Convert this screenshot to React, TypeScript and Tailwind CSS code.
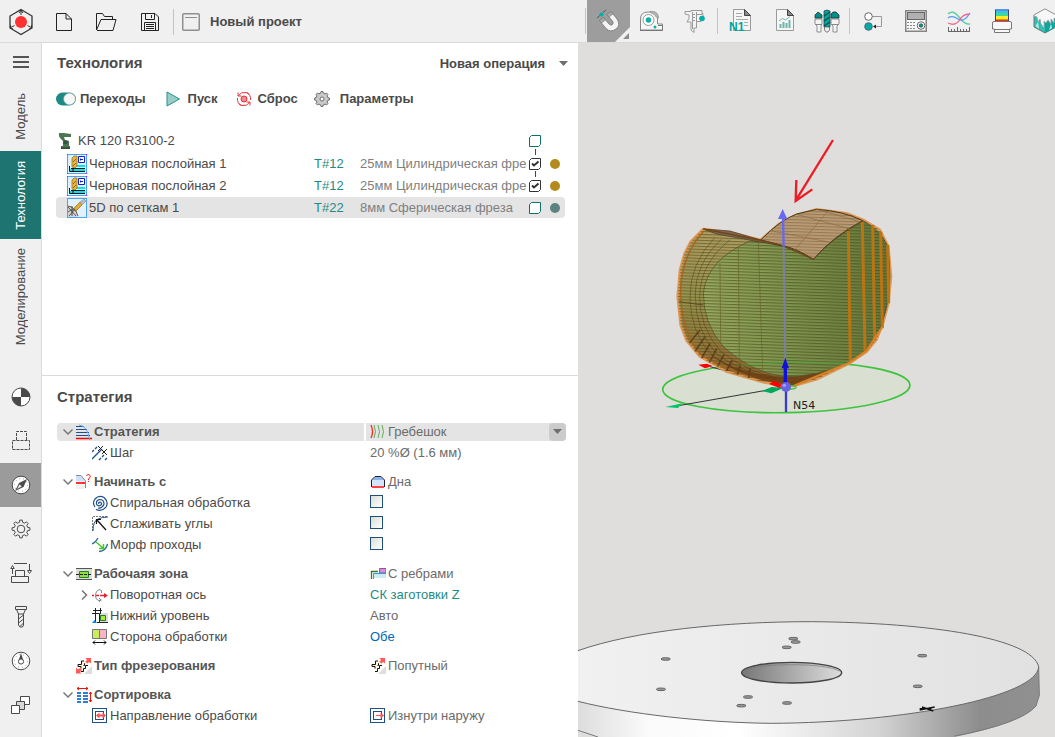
import React from 'react';
import clsx from 'clsx';

type IconProps = { className?: string };

/* ---------- helpers ---------- */

function gearPath(cx: number, cy: number, outer: number, inner: number, teeth: number) {
  const pts: string[] = [];
  const step = (Math.PI * 2) / teeth;
  for (let i = 0; i < teeth; i++) {
    const a = i * step - Math.PI / 2;
    [[-0.3, inner], [-0.17, outer], [0.17, outer], [0.3, inner]].forEach(([k, r]) => {
      pts.push(`${(cx + Math.cos(a + k * step) * r).toFixed(2)} ${(cy + Math.sin(a + k * step) * r).toFixed(2)}`);
    });
  }
  return `M${pts.join('L')}Z`;
}

function Svg({ w, h, children, className }: { w: number; h: number; children: React.ReactNode; className?: string }) {
  return (
    <svg width={w} height={h} viewBox={`0 0 ${w} ${h}`} fill="none" className={clsx('shrink-0', className)} aria-hidden="true">
      {children}
    </svg>
  );
}

const Caret = ({ className }: IconProps) => (
  <Svg w={9} h={5} className={className}><path d="M0 0H9L4.500 5Z" fill="#6e6e6e" /></Svg>
);

/* ---------- header icons ---------- */

const Logo = () => (
  <Svg w={26} h={28}>
    <path d="M13 1.500L24 8V20L13 26.500L2 20V8Z" stroke="#333" strokeWidth="1.300" />
    <path d="M13 2V7M2 20L6.500 17.500M24 20L19.500 17.500M11 5L13 2L15 5M2.500 17V20L5 21M23.500 17V20L21 21" stroke="#333" />
    <circle cx="13" cy="14" r="6" fill="#ff3030" />
  </Svg>
);

const FileIcon = () => (
  <Svg w={16} h={18}><path d="M.5 .5H10L15.500 6V17.500H.5ZM10 .5V6H15.500" stroke="#222" /></Svg>
);

const FolderIcon = () => (
  <Svg w={21} h={18}><path d="M.5 17V.5H6.500L8.500 3.500H16.500V6.500M.5 17L5 6.500H20L17 17.500H1" stroke="#222" /></Svg>
);

const SaveIcon = () => (
  <Svg w={18} h={18}>
    <path d="M.5 .5H14L17.500 4V17.500H.5ZM4.500 .5V6.500H13.500V.5M10.500 2V5M3.500 17V9.500H14.500V17" stroke="#222" />
    <path d="M5 11.500H13M5 13.500H13M5 15.500H13" stroke="#222" />
  </Svg>
);

const WindowIcon = () => (
  <Svg w={18} h={18}><rect x=".75" y=".75" width="16.500" height="16.500" rx="1" stroke="#8f8f8f" strokeWidth="1.500" /><path d="M3 4.500H15" stroke="#8f8f8f" /></Svg>
);

const Magnet = () => (
  <Svg w={24} h={24}>
    <path d="M2.500 11.500L6.500 8.500L12 15Q14 17 15.500 15.500Q17 14 15.500 12L10 5.500L14 2.500L20 10Q24 16 19 20Q13.500 24 9 19.500Z" fill="#f5f5f5" stroke="#777" strokeWidth=".8" />
    <path d="M2.500 11.500L6.500 8.500L8.500 11L4.500 14ZM10 5.500L14 2.500L16 5L12 8Z" fill="#aaa" stroke="#777" strokeWidth=".6" />
    <path d="M0 9L4 5.500M6 3.500L9 1" stroke="#555" />
    <circle cx="4.500" cy="5.500" r="2" fill="#00b0a6" />
  </Svg>
);

const Tape = () => (
  <Svg w={26} h={22}>
    <path d="M1.500 20V9Q1.500 2 9 2H13Q18.500 2 18.500 8V14H23.500V20Z" fill="#f7f7f7" stroke="#888" />
    <path d="M11 1.500H14Q19.500 2 19.500 8L17 7Q16 4 12 3Z" fill="#b5b5b5" stroke="#888" strokeWidth=".6" />
    <circle cx="9.500" cy="10" r="5.500" fill="#fff" stroke="#999" />
    <circle cx="9.500" cy="10" r="2.800" fill="#0cb0a6" />
    <path d="M19 15.500H23.500V20.500H1" stroke="#777" /><circle cx="16" cy="17" r="1.500" fill="#0cb0a6" />
  </Svg>
);

const Caliper = () => (
  <Svg w={22} h={25}>
    <path d="M1 2.500H7V1.500H18V4.500H19V9L17 12.500H12.500V19H10V23.500L7 21V13H3Q6 9 5 6L1 5Z" fill="#f3f3f3" stroke="#999" />
    <path d="M8.500 3V20M12.500 3V13M9 5.500H11M9 8.500H11M9 11.500H11M13 5.500H18" stroke="#999" />
    <circle cx="18" cy="9.500" r="2.800" fill="#00b0a6" />
  </Svg>
);

const PageShape = ({ children }: { children: React.ReactNode }) => (
  <Svg w={24} h={28}>
    <path d="M4.500 2.500H15.500L21.500 8.500V23.500H4.500Z" fill="#f6f6f6" stroke="#9a9a9a" />
    <path d="M15.500 2.500V8.500H21.500Z" fill="#888" stroke="#444" />
    {children}
  </Svg>
);

const N1Icon = () => (
  <PageShape>
    <path d="M7 6.500H13M7 9.500H13M7 12.500H19M15 15.500H19M15 18.500H19" stroke="#aaa" />
    <text x="0" y="24" fontFamily="Liberation Sans, sans-serif" fontWeight="700" fontSize="12" fill="#00a59b">N1</text>
  </PageShape>
);

const ReportIcon = () => (
  <PageShape>
    <path d="M8.500 21V17M11.500 21V15M14.500 21V16M17.500 21V13" stroke="#6fb5ad" strokeWidth="2" />
    <path d="M7 14L10.500 11.500L13.500 13L18 9.500" stroke="#6fb5ad" />
  </PageShape>
);

const Cutters = () => (
  <Svg w={26} h={24}>
    <path d="M1 10H8V15L7 17V23H3V17L1 15ZM17 10H25V15L23 17V23H19V17L17 15Z" fill="#f4f4f4" stroke="#777" strokeWidth=".8" />
    <path d="M1 9V6L4 3L8 6V9ZM17 9V5L19 3H22L25 6V9Z" fill="#008f87" stroke="#233" strokeWidth=".8" />
    <path d="M10 2L13 1L16 2V18H10Z" fill="#00a79c" stroke="#245" strokeWidth=".8" />
    <path d="M10 7L16 3M10 12L16 8M10 17L16 13" stroke="#154a48" strokeWidth="1.300" /><path d="M1 15.500H8M17 15.500H25" stroke="#888" />
    <path d="M10.500 18H15.500V21L14 23H12L10.500 21Z" fill="#eee" stroke="#666" strokeWidth=".8" />
  </Svg>
);

const NodesIcon = () => (
  <Svg w={20} h={20}>
    <path d="M9 5.500H18.500V15.500H11" stroke="#999" /><path d="M13 13.500V17.500L10 15.500Z" fill="#222" />
    <circle cx="5.500" cy="5.500" r="3.800" fill="#fff" stroke="#666" /><circle cx="5.500" cy="15.500" r="3.800" fill="#00aca3" stroke="#567" />
  </Svg>
);

const ControllerIcon = () => (
  <Svg w={22} h={22}>
    <rect x=".75" y=".75" width="20.500" height="20.500" fill="#f8f8f8" stroke="#858585" strokeWidth="1.500" />
    <rect x="2.500" y="2.500" width="17" height="7" fill="#b0b0b0" stroke="#666" />
    <path d="M2 12.500H10M2 15.500H10M2 18.500H10" stroke="#888" strokeDasharray="2 1" />
    <circle cx="16" cy="15.500" r="3.800" fill="#fff" stroke="#666" /><circle cx="16" cy="15.500" r="1.800" fill="#009a91" stroke="#333" strokeWidth=".6" />
  </Svg>
);

const CurvesIcon = () => (
  <Svg w={24} h={24}>
    <path d="M1 5Q6 0 12 8T23 15" stroke="#4fd29b" strokeWidth="1.300" /><path d="M1 9Q5 6 11 10Q17 14 23 4" stroke="#5a9af0" strokeWidth="1.300" /><path d="M1 14Q9 18 14 9Q17 5 23 5" stroke="#ef6a8c" strokeWidth="1.300" />
    <path d="M1 22.500H23M1.500 18V22M4.500 20V22M7.500 20V22M10.500 18V22M13.500 20V22M16.500 20V22M19.500 20V22M22.500 18V22" stroke="#666" />
  </Svg>
);

const PrinterIcon = () => (
  <Svg w={22} h={26}>
    <path d="M5 2H17V14H5Z" fill="#f22" /><path d="M5 2H17V12H5Z" fill="#f80" /><path d="M5 2H17V11H5Z" fill="#fe2" /><path d="M5 2H17V8H5Z" fill="#3cd9a0" /><path d="M5 2H17V5H5Z" fill="#36c5e0" /><path d="M4 1H18V3H4Z" fill="#5a8ee8" />
    <path d="M4.500 2V13M17.500 2V13" stroke="#446" />
    <path d="M1.500 15Q1.500 13.500 3 13.500H19Q20.500 13.500 20.500 15V21H18.500V24.500H3.500V21H1.500Z" fill="#f7f7f7" stroke="#777" /><path d="M3 21.500H19" stroke="#777" />
  </Svg>
);

const CubeIcon = () => (
  <Svg w={26} h={26}>
    <path d="M13 1L24 7V19L13 25L2 19V7Z" fill="#2dbfb5" stroke="#777" />
    <path d="M13 13V25L24 19V7Z" fill="#0fa59c" />
    <path d="M13 1L24 7V12L22 10V15L19 11V16L16 12L14 15L12 13V20L9 16L8 11L6 14L5 9L2 8V7Z" fill="#f7f7f7" stroke="#999" strokeWidth=".7" />
    <path d="M3.500 18L6 14L7 21ZM17 22L19 16L20 20Z" fill="#bdeae7" />
  </Svg>
);

/* ---------- side bar icons ---------- */

const stroke = '#4a4a4a';

const QuadrantIcon = () => (
  <Svg w={20} h={20}>
    <circle cx="10" cy="10" r="9" fill="#fff" stroke={stroke} />
    <path d="M10 10H1A9 9 0 0 1 10 1ZM10 10H19A9 9 0 0 1 10 19Z" fill={stroke} transform="rotate(90 10 10)" />
  </Svg>
);
const StockIcon = () => (
  <Svg w={18} h={20}><path d="M4.500 9V.5H14.500V9M.5 9.500H17.500V18.500H.5Z" stroke={stroke} strokeDasharray="3 1" /></Svg>
);
const CompassIcon = () => (
  <Svg w={20} h={20}>
    <circle cx="10" cy="10" r="8.800" fill="#fff" stroke={stroke} />
    <circle cx="10" cy="10" r="6.500" stroke="#999" strokeDasharray="1 3" />
    <path d="M16 4L12.500 12L4 16L8 8Z" fill={stroke} /><path d="M5.500 14.500L8.500 9L11 11.500Z" fill="#fff" stroke={stroke} strokeWidth=".6" />
  </Svg>
);
const GearIcon = () => (
  <Svg w={20} h={20}><path d={gearPath(10, 10, 9, 6.8, 8)} stroke={stroke} strokeLinejoin="round" /><circle cx="10" cy="10" r="3.800" stroke={stroke} /></Svg>
);
const FixtureIcon = () => (
  <Svg w={22} h={20}>
    <path d="M4 .5H17M5.500 13V7.500H14.500V13M1.500 13.500H18.500V19.500H1.500ZM2.500 11V4M19.500 1V8" stroke={stroke} />
    <path d="M2.500 2.500L.8 5.500H4.200ZM19.500 10.500L17.500 7.500H21.500Z" fill="#fff" stroke={stroke} />
  </Svg>
);
const DrillIcon = () => (
  <Svg w={12} h={22}><path d="M.5 .5H11.500V3.500H.5ZM1.500 3.500L3.500 8H8.500L10.500 3.500M3.500 8V19L5 21H7.500L8.500 19V8M3.500 13L8.500 9M3.500 17L8.500 13M5 20.500L8.500 17" stroke={stroke} /></Svg>
);
const GaugeIcon = () => (
  <Svg w={20} h={20}>
    <circle cx="10" cy="10" r="8.800" fill="#fff" stroke={stroke} />
    <circle cx="10" cy="10" r="6.500" stroke="#999" strokeDasharray="1 3" />
    <path d="M10 2L12.500 10H7.500Z" fill={stroke} /><circle cx="10" cy="10.500" r="2.600" fill="#fff" stroke={stroke} />
  </Svg>
);
const StepsIcon = () => (
  <Svg w={19} h={19}>
    <path d="M9.500 .5H18.500V8.500H9.500Z" fill="#fff" stroke={stroke} />
    <path d="M5.500 5.500H13.500V13.500H5.500Z" fill="#d8d8d8" stroke={stroke} />
    <path d="M.5 9.500H8.500V17.500H.5Z" fill="#fff" stroke={stroke} />
  </Svg>
);

/* ---------- operation icons ---------- */

const PlayIcon = () => <Svg w={14} h={16}><path d="M1 1L13.500 8L1 15Z" fill="#9accc7" stroke="#24938c" /></Svg>;
const ResetIcon = () => (
  <Svg w={16} h={16}>
    <circle cx="8" cy="8" r="3" fill="#f28a8a" stroke="#e5343a" />
    <path d="M2 5Q5 .5 10 1.500L13 3M1.500 7Q1 12 5 14.500M14 11Q11 15.500 6 14.500L3 13M14.500 9Q15 4 11 1.500M2 1.500V5H5.500M14 14.500V11H10.500" stroke="#e5343a" />
  </Svg>
);
const ParamsIcon = () => (
  <Svg w={16} h={16}><path d={gearPath(8, 8, 7.5, 6, 8)} fill="#c9c9c9" stroke="#6b6b6b" strokeLinejoin="round" /><circle cx="8" cy="8" r="2" fill="#fff" stroke="#6b6b6b" /></Svg>
);
const RobotIcon = () => (
  <Svg w={16} h={18}>
    <path d="M1 1H6L13 2V5L6 5L7 8L11 9V14H12V17H3V14H5V9L2 6L1 4Z" fill="#4d7553" /><path d="M6 8L10 9L9 12L5 12ZM3 15H12V17H3Z" fill="#35553c" />
  </Svg>
);
const RoughIcon = () => (
  <Svg w={20} h={20}>
    <rect x=".5" y=".5" width="19" height="19" fill="#dff0ff" stroke="#4aa3f0" />
    <path d="M8 11H18V13H8ZM3 15H18V17H3Z" fill="#00e5f0" /><path d="M2.500 12V17.500H18M4 14.500H18M6 14V17" stroke="#111" />
    <path d="M5 4L7 2H10V12L8 14L5 13Z" fill="#e6b640" stroke="#9a7420" strokeWidth=".8" /><path d="M6 8L9 5M6 12L9 9" stroke="#8a6a10" />
    <path d="M11.500 2.500H17.500V8.500H11.500Z" fill="#fff" stroke="#1020d0" /><path d="M13.500 5.500H16M13.500 4.500V6.500" stroke="#1020d0" />
    <path d="M0 0H1V1H0ZM19 0H20V1H19ZM0 19H1V20H0ZM19 19H20V20H19Z" fill="#f0f" />
  </Svg>
);
const MeshIcon = () => (
  <Svg w={20} h={20}>
    <rect x=".5" y=".5" width="19" height="19" fill="#e3f1ff" stroke="#4aa3f0" />
    <path d="M1 8Q9 8 11 19H1Z" fill="#d5d5d5" />
    <path d="M1 8Q8 9 11 18M1 14Q6 10 10 13M1 9L9 18M2 18L8 11M5 8V18" stroke="#333" strokeWidth=".8" />
    <path d="M8 12L7 10L13 4L15 7L9 13Z" fill="#e2ac38" stroke="#8a6010" strokeWidth=".6" /><path d="M13 4L17 1L19 3L15 7Z" fill="#bbb" stroke="#888" strokeWidth=".6" />
  </Svg>
);

/* ---------- property icons ---------- */

// zig-zag with an arrow at the upper right end
const climb = (
  <>
    <path d="M8 16L16 8V16Z" fill="#ddd" />
    <path d="M9.500 0H15V5.500L13 4L10.500 6.500L8.500 4.500L11 2Z" fill="#ff5a55" />
    <path d="M2 7L4 9L6 13L8 11L7 8L11 6L13 8L11 5L8 3L5 4L7 7Z" fill="#fff8d8" />
    <path d="M8 3H5.500V6.500H2V8.500H5M12 7.500H9.500V10.500H7.500V13.500H5M9 5.500H8.500V7.500H7.500M5 8.500V10.500" stroke="#111" />
  </>
);

const icons: Record<string, React.ReactNode> = {
  strategy: <><path d="M0 2.500H8M0 5.500H11M0 8.500H13M0 11.500H14" stroke="#1f4e8c" /><path d="M0 14.500H16" stroke="#f00" strokeWidth="1.500" /><path d="M3 1Q12 2 13.500 16" stroke="#5fb0f0" /></>,
  step: <><path d="M0 7L2 5M3 4L5 2M0 14L10 4M7 15L9 13M10 12L12 10M13 15L15 13" stroke="#1f4e8c" strokeWidth="1.300" /><path d="M6 1L15 10M11 1L6 6M15 4L10 9" stroke="#222" /></>,
  start: <><path d="M0 2H5L9 7H0Z" fill="#cfe0fa" /><path d="M0 7H9V9H0Z" fill="#e8f0fc" /><path d="M0 11H9V15H0Z" fill="#f0f0f0" /><path d="M0 1.500H5L9.500 7V14" stroke="#888" /><path d="M0 8H9V10H0Z" fill="#f33" /><path d="M10.500 2Q11 .5 13 .5Q15.500 2 13.500 4L12.500 5V6M12.500 7V8" stroke="#e22" /></>,
  spiral: <path d="M7 9Q6 7 8 7Q10.500 8 9 10Q6 12 4.500 9Q4 5 7.500 4.500Q12 4.500 12 9Q10.500 13.500 6 13M3 12Q0 8 3 4Q7 -.5 12 2.500Q17 7 14 12Q10 17 4 14.500" stroke="#1f4e8c" strokeWidth="1.200" />,
  corners: <><path d="M.5 15V.5H16" stroke="#777" strokeDasharray="2 1" /><path d="M1 15Q1 5 6 3Q10 1 16 1" stroke="#1f4e8c" /><path d="M14 14L5 4M4.500 8V3.500H9" stroke="#111" strokeWidth="1.200" /></>,
  morph: <><path d="M0 7Q3 6 6 1M7 14.500Q14 14 15.500 7" stroke="#2c6a96" strokeWidth="1.300" /><path d="M4 5L11 11M11.500 7V11.500H7" stroke="#4c2" strokeWidth="1.500" /></>,
  zone: <><path d="M0 2H16V14H0Z" fill="#ddd" /><path d="M0 2.500H16M0 13.500H16" stroke="#555" /><path d="M3.500 5.500H12.500V11.500H3.500Z" fill="#91dd42" stroke="#248024" /><path d="M0 8.500H16" stroke="#222" strokeDasharray="3 1" /></>,
  axis: <><path d="M0 8.500H2M4 8.500H7M8 8.500H13" stroke="#d23" strokeWidth="1.500" /><path d="M12 6L16 8.500L12 11Z" fill="#d23" /><path d="M9.500 6V3.500L7 2.500Q3.500 4 3.500 8Q3.500 13 7 13.500L9.500 13M7 11L9 13L7 15" stroke="#888" /></>,
  lower: <><path d="M7 5H16V15H7Z" fill="#ddd" /><path d="M3.500 0V14M8.500 0V6M1 2.500H10M5 14.500H16M0 5.500H7.500V14" stroke="#222" /><path d="M8.500 7.500H13.500V12.500H8.500Z" fill="#a8ec30" stroke="#297a29" /><path d="M0 15L2.500 12L5 15Z" fill="#08f" /></>,
  side: <><path d="M.5 .5H7.500V9.500H.5Z" fill="#c9ef5b" stroke="#777" /><path d="M7.500 .5H14.500V9.500H7.500Z" fill="#ffb0cb" stroke="#777" /><path d="M1 13.500H14M3 11.500L1 13.500L3 15.500M12 11.500L14 13.500L12 15.500" stroke="#111" /></>,
  milling: <>{climb}<path d="M0 9.500L2 11.500L4 10L6 12L4 14L5.500 15.500H0Z" fill="#ff5a55" /></>,
  sort: <><path d="M1 5H5V7H1ZM7 5H12V7H7ZM1 8H5V10H1ZM7 8H12V10H7ZM1 11H5V13H1ZM7 11H12V13H7ZM1 14H5V16H1ZM7 14H12V16H7Z" fill="#2d7ddb" /><path d="M1 1.500H12M3 0L1 1.500L3 3M10 0L12 1.500L10 3M14.500 5V15M13 7L14.500 5L16 7M13 13L14.500 15L16 13" stroke="#e11" /></>,
  direction: <><rect x=".5" y=".5" width="14" height="14" fill="#fff" stroke="#1f4e8c" /><rect x="3.500" y="3.500" width="8" height="8" stroke="#1f4e8c" /><path d="M4 7.500L7.500 4.500V10.500ZM14 7.500L10.500 4.500V10.500Z" fill="#f55" /><path d="M5 7.500H13" stroke="#f55" strokeWidth="2" /></>,
  scallop: <><path d="M1 1Q4 8 1 14" stroke="#f22" strokeWidth="1.300" /><path d="M4 1Q7 8 4 14M8 1Q11 8 8 14M12 1Q15 8 12 14" stroke="#62a85a" /></>,
  bottom: <><path d="M1.500 6L5 2.500H11L14.500 6V13H1.500Z" fill="#d4e5fb" /><path d="M2 6L5 3H11L14 6Z" fill="#8ab4ee" /><path d="M1.500 13V6L5 2.500H11L14.500 6V13" stroke="#223" /><path d="M2 12H14V14H2Z" fill="#f44" /></>,
  edges: <><path d="M9.500 2.500H16V7H9.500Z" fill="#d193d7" stroke="#a04aa8" /><path d="M1.500 13V5.500H8" stroke="#3a7a1a" strokeWidth="1.300" /><path d="M4 8H16V12H4Z" fill="#cdebf5" /><path d="M3.500 13V7.500H16" stroke="#28a0d8" /></>,
  climb,
  outward: <><rect x=".5" y=".5" width="14" height="14" fill="#fff" stroke="#1f4e8c" /><rect x="3.500" y="3.500" width="8" height="8" stroke="#1f4e8c" /><path d="M14 7.500L10.500 4.500V10.500Z" fill="#f55" /><path d="M6 7.500H13" stroke="#f55" /></>,
};

const PropIcon = ({ name }: { name: string }) => <Svg w={16} h={16}>{icons[name]}</Svg>;

/* ---------- data ---------- */

const tools = [
  [Magnet, Tape, Caliper],
  [N1Icon, ReportIcon, Cutters],
  [NodesIcon, ControllerIcon, CurvesIcon, PrinterIcon, CubeIcon],
];

const sideTools = [
  { icon: QuadrantIcon, label: 'Наладка' },
  { icon: StockIcon, label: 'Заготовка' },
  { icon: CompassIcon, label: 'Стратегия', active: true },
  { icon: GearIcon, label: 'Параметры' },
  { icon: FixtureIcon, label: 'Подходы' },
  { icon: DrillIcon, label: 'Инструмент' },
  { icon: GaugeIcon, label: 'Режимы' },
  { icon: StepsIcon, label: 'Переходы' },
];

const operations = [
  { name: 'Черновая послойная 1', tool: 'T#12', desc: '25мм Цилиндрическая фре', done: true, icon: RoughIcon, dot: 'bg-[#b58a1b]' },
  { name: 'Черновая послойная 2', tool: 'T#12', desc: '25мм Цилиндрическая фре', done: true, icon: RoughIcon, dot: 'bg-[#b58a1b]' },
  { name: '5D по сеткам 1', tool: 'T#22', desc: '8мм Сферическая фреза', done: false, icon: MeshIcon, dot: 'bg-[#5d8282]', selected: true },
];

type Prop = {
  label: string;
  icon: string;
  level?: number;
  chevron?: 'open' | 'closed';
  value?: string;
  valueIcon?: string;
  check?: boolean;
  select?: boolean;
  tone?: string;
};

const groups: Prop[][] = [
  [
    { label: 'Стратегия', icon: 'strategy', chevron: 'open', value: 'Гребешок', valueIcon: 'scallop', select: true },
    { label: 'Шаг', icon: 'step', level: 2, value: '20 %Ø (1.6 мм)' },
  ],
  [
    { label: 'Начинать с', icon: 'start', chevron: 'open', value: 'Дна', valueIcon: 'bottom' },
    { label: 'Спиральная обработка', icon: 'spiral', level: 2, check: true },
    { label: 'Сглаживать углы', icon: 'corners', level: 2, check: true },
    { label: 'Морф проходы', icon: 'morph', level: 2, check: true },
  ],
  [
    { label: 'Рабочаяя зона', icon: 'zone', chevron: 'open', value: 'С ребрами', valueIcon: 'edges' },
    { label: 'Поворотная ось', icon: 'axis', level: 2, chevron: 'closed', value: 'СК заготовки Z', tone: 'text-[#1f8a84]' },
    { label: 'Нижний уровень', icon: 'lower', level: 2, value: 'Авто' },
    { label: 'Сторона обработки', icon: 'side', level: 2, value: 'Обе', tone: 'text-[#0068b4]' },
  ],
  [{ label: 'Тип фрезерования', icon: 'milling', value: 'Попутный', valueIcon: 'climb' }],
  [
    { label: 'Сортировка', icon: 'sort', chevron: 'open' },
    { label: 'Направление обработки', icon: 'direction', level: 2, value: 'Изнутри наружу', valueIcon: 'outward' },
  ],
];

/* ---------- header ---------- */

function Header() {
  return (
    <header className="flex h-[43px] shrink-0 overflow-hidden border-b border-[#dadada] bg-[#f0f0f0]">
      <div className="flex w-[578px] shrink-0 items-center pt-0.5 pl-2">
        <Logo />
        <button aria-label="Новый" className="ml-[22px]"><FileIcon /></button>
        <button aria-label="Открыть" className="ml-6"><FolderIcon /></button>
        <button aria-label="Сохранить" className="ml-6"><SaveIcon /></button>
        <span className="mr-2 ml-3.5 h-[26px] w-px bg-[#c4c4c4]" />
        <WindowIcon />
        <span className="ml-2.5 font-bold">Новый проект</span>
      </div>
      <div className="flex shrink-0 items-center pl-[7px]">
        {tools.map((group, g) => (
          <React.Fragment key={g}>
            <span className={clsx('mr-px h-[26px] w-px shrink-0 bg-[#c4c4c4]', g > 0 && 'ml-px')} />
            {group.map((Icon, i) => {
              const active = g === 0 && i === 0;
              return (
                <button key={i} aria-label={`Инструмент ${g + 1}.${i + 1}`} className={clsx('relative flex h-[42px] w-[43px] shrink-0 items-center justify-center', active && 'bg-[#9d9d9d]')}>
                  <Icon />
                  {active && (
                    <svg width="15" height="15" viewBox="0 0 15 15" className="absolute right-0 bottom-0" aria-hidden="true">
                      <path d="M15 0V15H0Z" fill="#f0f0f0" /><path d="M14 6V12H8Z" fill="#8c8c8c" />
                    </svg>
                  )}
                </button>
              );
            })}
          </React.Fragment>
        ))}
      </div>
    </header>
  );
}

/* ---------- side bar ---------- */

function SideBar() {
  const tab = 'flex items-center justify-center text-[13px]';
  const vertical = 'rotate-180 [writing-mode:vertical-rl]';
  return (
    <nav className="flex w-[42px] shrink-0 flex-col border-r border-[#dadada] bg-[#f0f0f0]">
      <button aria-label="Меню" className="flex h-[38px] items-center justify-center">
        <Svg w={16} h={14}><path d="M0 2H16M0 7H16M0 12H16" stroke="#555" strokeWidth="2" /></Svg>
      </button>
      <button className={clsx(tab, 'h-[70px]')}><span className={vertical}>Модель</span></button>
      <button className={clsx(tab, 'h-[88px] bg-[#1d7471] text-white')}><span className={vertical}>Технология</span></button>
      <button className={clsx(tab, 'mb-5 h-[116px]')}><span className={vertical}>Моделирование</span></button>
      {sideTools.map(({ icon: Icon, label, active }) => (
        <button key={label} aria-label={label} className={clsx('flex h-11 items-center justify-center', active && 'bg-[#9b9b9b]')}>
          <Icon />
        </button>
      ))}
    </nav>
  );
}

/* ---------- operations ---------- */

function LeafCheck({ checked, label }: { checked: boolean; label: string }) {
  return (
    <label className="grid shrink-0 items-center justify-items-center">
      <input type="checkbox" defaultChecked={checked} aria-label={label} className="col-start-1 row-start-1 size-3 appearance-none" />
      <svg width="12" height="12" viewBox="0 0 12 12" fill="none" className={clsx('pointer-events-none col-start-1 row-start-1', checked ? 'text-[#333]' : 'text-[#0f6f6c]')}>
        <path d="M2.500 .5H11.500V9.500L9.500 11.500H.5V2.500Z" fill="#fff" stroke="currentColor" />
        {checked && <path d="M3 5.500L5 7.500L9.500 3.500" stroke="currentColor" strokeWidth="2" />}
      </svg>
    </label>
  );
}

function Operations() {
  return (
    <section className="h-[333px] shrink-0 border-b border-[#dadada] pr-[13px] pl-3.5">
      <div className="flex h-[39px] items-center justify-between pl-px">
        <h2 className="text-[15px] font-bold">Технология</h2>
        <button className="flex items-center gap-3.5 pt-0.5 font-bold">Новая операция <Caret className="mr-[-3px]" /></button>
      </div>
      <div className="flex h-[34px] items-center font-bold">
        <label className="flex items-center gap-1">
          <input type="checkbox" role="switch" defaultChecked className="sr-only" />
          <Svg w={20} h={14}><rect x="0" y=".5" width="20" height="13" rx="6.500" fill="#1e8a85" /><circle cx="13.500" cy="7" r="5.800" fill="#f7f7f7" stroke="#bbb" strokeWidth=".5" /></Svg>
          Переходы
        </label>
        <button className="ml-5 flex items-center gap-2"><PlayIcon />Пуск</button>
        <button className="ml-[18px] flex items-center gap-1.5"><ResetIcon />Сброс</button>
        <button className="ml-4 flex items-center gap-2.5"><ParamsIcon />Параметры</button>
      </div>

      <ul className="mt-3.5">
        <li className="flex h-[22px] items-center pr-6 pl-0.5">
          <RobotIcon />
          <span className="ml-1 flex-1">KR 120 R3100-2</span>
          <LeafCheck checked={false} label="KR 120 R3100-2" />
        </li>
        {operations.map(({ name, tool, desc, done, icon: Icon, dot, selected }) => (
          <li key={name} className={clsx('relative flex h-[22px] items-center rounded border-t border-white bg-clip-padding pr-[5px] pl-[11px]', selected && 'bg-[#e4e4e4]')}>
            {done && <span className="absolute -top-1 right-[29px] h-1.5 w-px bg-[#e00]" />}
            <Icon />
            <span className="ml-0.5 min-w-0 flex-1 truncate">{name}</span>
            <span className="w-[46px] shrink-0 text-[#1f8a84]">{tool}</span>
            <span className="w-[164px] shrink-0 whitespace-nowrap text-[#808080]">{desc}</span>
            <span className="ml-[5px] flex items-center gap-[9px]">
              <LeafCheck checked={done} label={name} />
              <span className={clsx('size-2.5 rounded-full', dot)} />
            </span>
          </li>
        ))}
      </ul>
    </section>
  );
}

/* ---------- properties ---------- */

function PropRow({ row }: { row: Prop }) {
  const sub = row.level === 2;
  return (
    <div className="flex h-[21px] items-center gap-0.5">
      <div className={clsx('flex h-[18px] w-[307px] shrink-0 items-center rounded-l', sub ? 'pl-[22px]' : 'pl-1.5 font-bold text-[#555]', row.select && 'bg-[#e4e4e4]')}>
        <span className="w-[13px] shrink-0">
          {row.chevron && (
            <Svg w={10} h={10}><path d={row.chevron === 'open' ? 'M.5 2.500L5 7L9.500 2.500' : 'M3 .5L7.500 5L3 9.500'} stroke="#777" strokeWidth="1.500" /></Svg>
          )}
        </span>
        <PropIcon name={row.icon} />
        <span className="ml-0.5 whitespace-nowrap">{row.label}</span>
      </div>
      <div className={clsx('flex h-[18px] flex-1 items-center gap-0.5 rounded-r pl-1 text-[#6b6b6b]', row.select && 'bg-[#e4e4e4]')}>
        {row.valueIcon && <PropIcon name={row.valueIcon} />}
        {row.check && (
          <input type="checkbox" aria-label={row.label} className="mb-0.5 size-[13px] appearance-none border border-[#1f4e79] bg-linear-to-br from-[#dcdcd6] to-white" />
        )}
        {row.select ? (
          <div className="grid h-full flex-1 items-center">
            <select aria-label={row.label} className="col-start-1 row-start-1 h-full w-full appearance-none bg-transparent outline-none">
              <option>{row.value}</option>
            </select>
            <span className="pointer-events-none col-start-1 row-start-1 flex h-full w-[17px] items-center justify-center justify-self-end rounded bg-[#cbcbcb]">
              <Caret />
            </span>
          </div>
        ) : (
          row.value && <span className={clsx('whitespace-nowrap', row.tone)}>{row.value}</span>
        )}
      </div>
    </div>
  );
}

function Properties() {
  return (
    <section className="flex-1 pr-3 pl-[15px]">
      <h2 className="mb-[3px] flex h-[42px] items-center text-[15px] font-bold">Стратегия</h2>
      <div className="flex flex-col gap-2">
        {groups.map((rows, i) => (
          <div key={i}>{rows.map((row) => <PropRow key={row.label} row={row} />)}</div>
        ))}
      </div>
    </section>
  );
}

/* ---------- 3D view ---------- */

const plateHoles = [
  [263, 147], [249, 238], [510, 261], [490, 287], [627, 279], [626, 112], [653, 96], [646, 86], [1033, 137], [1019, 229],
];

const bodyPath = 'M160 297L122 335L104 370L90 420L83 500L92 585L110 632L150 680L230 725L340 757L430 768L500 748L600 699L650 665L680 628L699 580L715 520L723 440L715 350L690 300L640 270L590 250L500 238L440 255L390 280L332 330L240 307Z';
const frontPath = 'M300 333Q350 334 402 350L490 388Q540 335 590 303L640 273Q690 298 714 350Q725 440 710 530Q690 620 648 662L600 697Q500 742 400 740Q300 725 220 650Q160 580 160 490Q170 390 300 333Z';
const topPath = 'M332 330Q390 270 440 252L500 238Q580 243 638 272Q550 318 490 388Q440 356 402 348Z';

function PartModel() {
  return (
    <g transform="translate(72 87) scale(.33333)" fill="none">
      <ellipse cx="409" cy="772" rx="371" ry="76" fill="#cfe0c0" fillOpacity=".4" stroke="#3cc43c" strokeWidth="5" transform="rotate(-1 409 772)" />
      <path d="M180 710L405 770M80 828L400 772" stroke="#333" strokeWidth="3" />
      <path d="M145 704L165 715L188 708L170 701Z" fill="#f00" /><path d="M46 831L97 820L84 834Z" fill="#00c465" />

      <path d={bodyPath} fill="url(#side)" stroke="#df9a58" strokeWidth="8" strokeLinejoin="round" />
      <path d={bodyPath} fill="url(#mesh)" opacity=".7" />
      <path d="M160 305Q100 370 92 470Q90 600 150 672Q230 730 400 760" stroke="#a8631c" strokeWidth="4" />
      <path d="M195 322Q120 400 120 500Q120 610 190 680Q260 730 380 750M215 327Q135 400 136 500Q136 600 200 672Q270 725 380 747M240 330Q150 400 149 500Q148 590 210 662Q280 720 380 744" stroke="#4d3b14" strokeWidth="2" opacity=".7" />
      <path d="M150 600L118 640M165 620L135 664M180 640L155 684M200 656L178 698M222 674L202 710M246 690L230 722M272 704L262 734M300 716L296 744" stroke="#3f2a0e" strokeWidth="5" opacity=".6" />
      <path d="M180 672Q270 735 400 740Q500 742 600 697L430 768Q270 748 180 672Z" fill="#6a3c12" opacity=".75" />
      <path d="M87 515L160 525" stroke="#5d4b20" strokeWidth="3" />

      <path d={frontPath} fill="url(#front)" stroke="#50481f" strokeWidth="2" />
      <path d={frontPath} fill="url(#mesh)" opacity=".75" />
      <path d="M210 400L212 640M265 350L268 690M325 334L338 727" stroke="#6f6a2c" strokeWidth="3" opacity=".8" />
      <path d={topPath} fill="#bd9b76" stroke="#493617" strokeWidth="3" />
      <path d={topPath} fill="url(#mesh)" opacity=".45" />
      <path d="M360 302L535 336M500 238L632 276M440 253L600 297M535 242L430 365" stroke="#8c6a40" strokeWidth="2" />
      <path d="M160 297L240 303L332 330L402 348L320 334L200 312Z" fill="#806654" stroke="#4c3921" strokeWidth="2" />
      <path d="M160 297Q280 320 350 335T490 388" stroke="#704519" strokeWidth="4" />
      <path d="M595 303L601 695M637 276L645 662M668 285L674 632M692 305L697 595M713 345L716 520" stroke="#ba7411" strokeWidth="9" />
      <path d="M430 768L600 697L650 662L697 590" stroke="#d98124" strokeWidth="6" />
      <path d="M270 706Q410 690 590 700" stroke="#38b832" strokeWidth="3" opacity=".6" />

      <path d="M399 262L401 350" stroke="#6767f2" strokeWidth="7" /><path d="M401 350L406 690" stroke="#7a80a4" strokeWidth="6" />
      <path d="M398 237L412 267H384Z" fill="#6868f0" />
      <path d="M406 705V765" stroke="#1010d8" strokeWidth="10" /><path d="M406 683L417 715H395Z" fill="#1010d8" />
      <path d="M357 762L372 753L395 763L390 775Z" fill="#f00" />
      <path d="M336 783L365 771L400 774L364 790Z" fill="#00a85a" />
      <ellipse cx="424" cy="772" rx="14" ry="5" stroke="#3cc43c" strokeWidth="4" />
      <path d="M408 772V846" stroke="#3c3ccc" strokeWidth="7" />
      <circle cx="408" cy="771" r="15" fill="#6565dd" /><circle cx="403" cy="766" r="5" fill="#a0a0ff" />
      <path d="M549 30L437 212M439 150L437 213L487 178" stroke="#ee1c24" strokeWidth="7" />
    </g>
  );
}

function Plate() {
  return (
    <g transform="translate(0 567) scale(.33333)" fill="none">
      <path d="M0 272V361Q30 371 60 381H1130Q1330 340 1374 288L1384 256L1382 170Z" fill="url(#rim)" />
      <path d="M0 361Q30 371 60 381M1130 378Q1330 340 1374 288L1384 256L1382 170" stroke="#777" strokeWidth="3" />
      <path d="M0 122C170 62 440 35 700 35C1060 38 1362 85 1382 170C1378 260 980 338 580 340C380 338 150 312 0 274Z" fill="url(#plate)" />
      <path d="M0 122C170 62 440 35 700 35C1060 38 1362 85 1382 170C1378 260 980 338 580 340C380 338 150 312 0 274" stroke="#666" strokeWidth="3" />
      <ellipse cx="641" cy="188" rx="150" ry="31" fill="url(#hole)" stroke="#444" strokeWidth="4" />
      <path d="M494 184Q530 164 640 164T788 184" stroke="#777" strokeWidth="2" />
      {plateHoles.map(([x, y]) => (
        <ellipse key={`${x}-${y}`} cx={x} cy={y} rx="14" ry="4" fill="#999" stroke="#666" strokeWidth="3" />
      ))}
      <path d="M1025 300L1070 291M1032 291L1066 303M1025 296H1060" stroke="#111" strokeWidth="4" />
    </g>
  );
}

function Viewport() {
  return (
    <main className="flex min-w-0 flex-1 bg-[#dfdedd]">
      <svg viewBox="0 0 477 694" className="w-full self-start" role="img" aria-label="3D модель">
        <defs>
          <pattern id="mesh" width="9" height="9" patternUnits="userSpaceOnUse" patternTransform="rotate(2)">
            <path d="M0 2H9" stroke="#4b4a1c" strokeWidth="3" />
          </pattern>
          <linearGradient id="front"><stop offset="0" stopColor="#9aac62" /><stop offset=".45" stopColor="#7f9750" /><stop offset="1" stopColor="#65773a" /></linearGradient>
          <linearGradient id="side" x1="0" y1="0" x2="0" y2="1"><stop offset="0" stopColor="#bca16a" /><stop offset=".5" stopColor="#9c9850" /><stop offset="1" stopColor="#96602c" /></linearGradient>
          <linearGradient id="plate"><stop offset="0" stopColor="#f1f1f1" /><stop offset="1" stopColor="#e1e1e1" /></linearGradient>
          <linearGradient id="rim"><stop offset="0" stopColor="#ddd" /><stop offset=".15" stopColor="#fafafa" /><stop offset=".35" stopColor="#fff" /><stop offset=".65" stopColor="#d4d4d4" /><stop offset=".87" stopColor="#8d8d8d" /><stop offset="1" stopColor="#909090" /></linearGradient>
          <linearGradient id="hole"><stop offset="0" stopColor="#777" /><stop offset="1" stopColor="#ddd" /></linearGradient>
        </defs>
        <Plate />
        <PartModel />
        <text x="215" y="366" fontFamily="DejaVu Sans, sans-serif" fontSize="11" fill="#222">N54</text>
      </svg>
    </main>
  );
}

export default function App() {
  return (
    <div className="flex min-h-screen flex-col overflow-hidden bg-white font-['Liberation_Sans',Arial,sans-serif] text-[13px] leading-4 text-[#4a4a4a]">
      <Header />
      <div className="flex flex-1">
        <SideBar />
        <div className="flex w-[536px] shrink-0 flex-col">
          <Operations />
          <Properties />
        </div>
        <Viewport />
      </div>
    </div>
  );
}
